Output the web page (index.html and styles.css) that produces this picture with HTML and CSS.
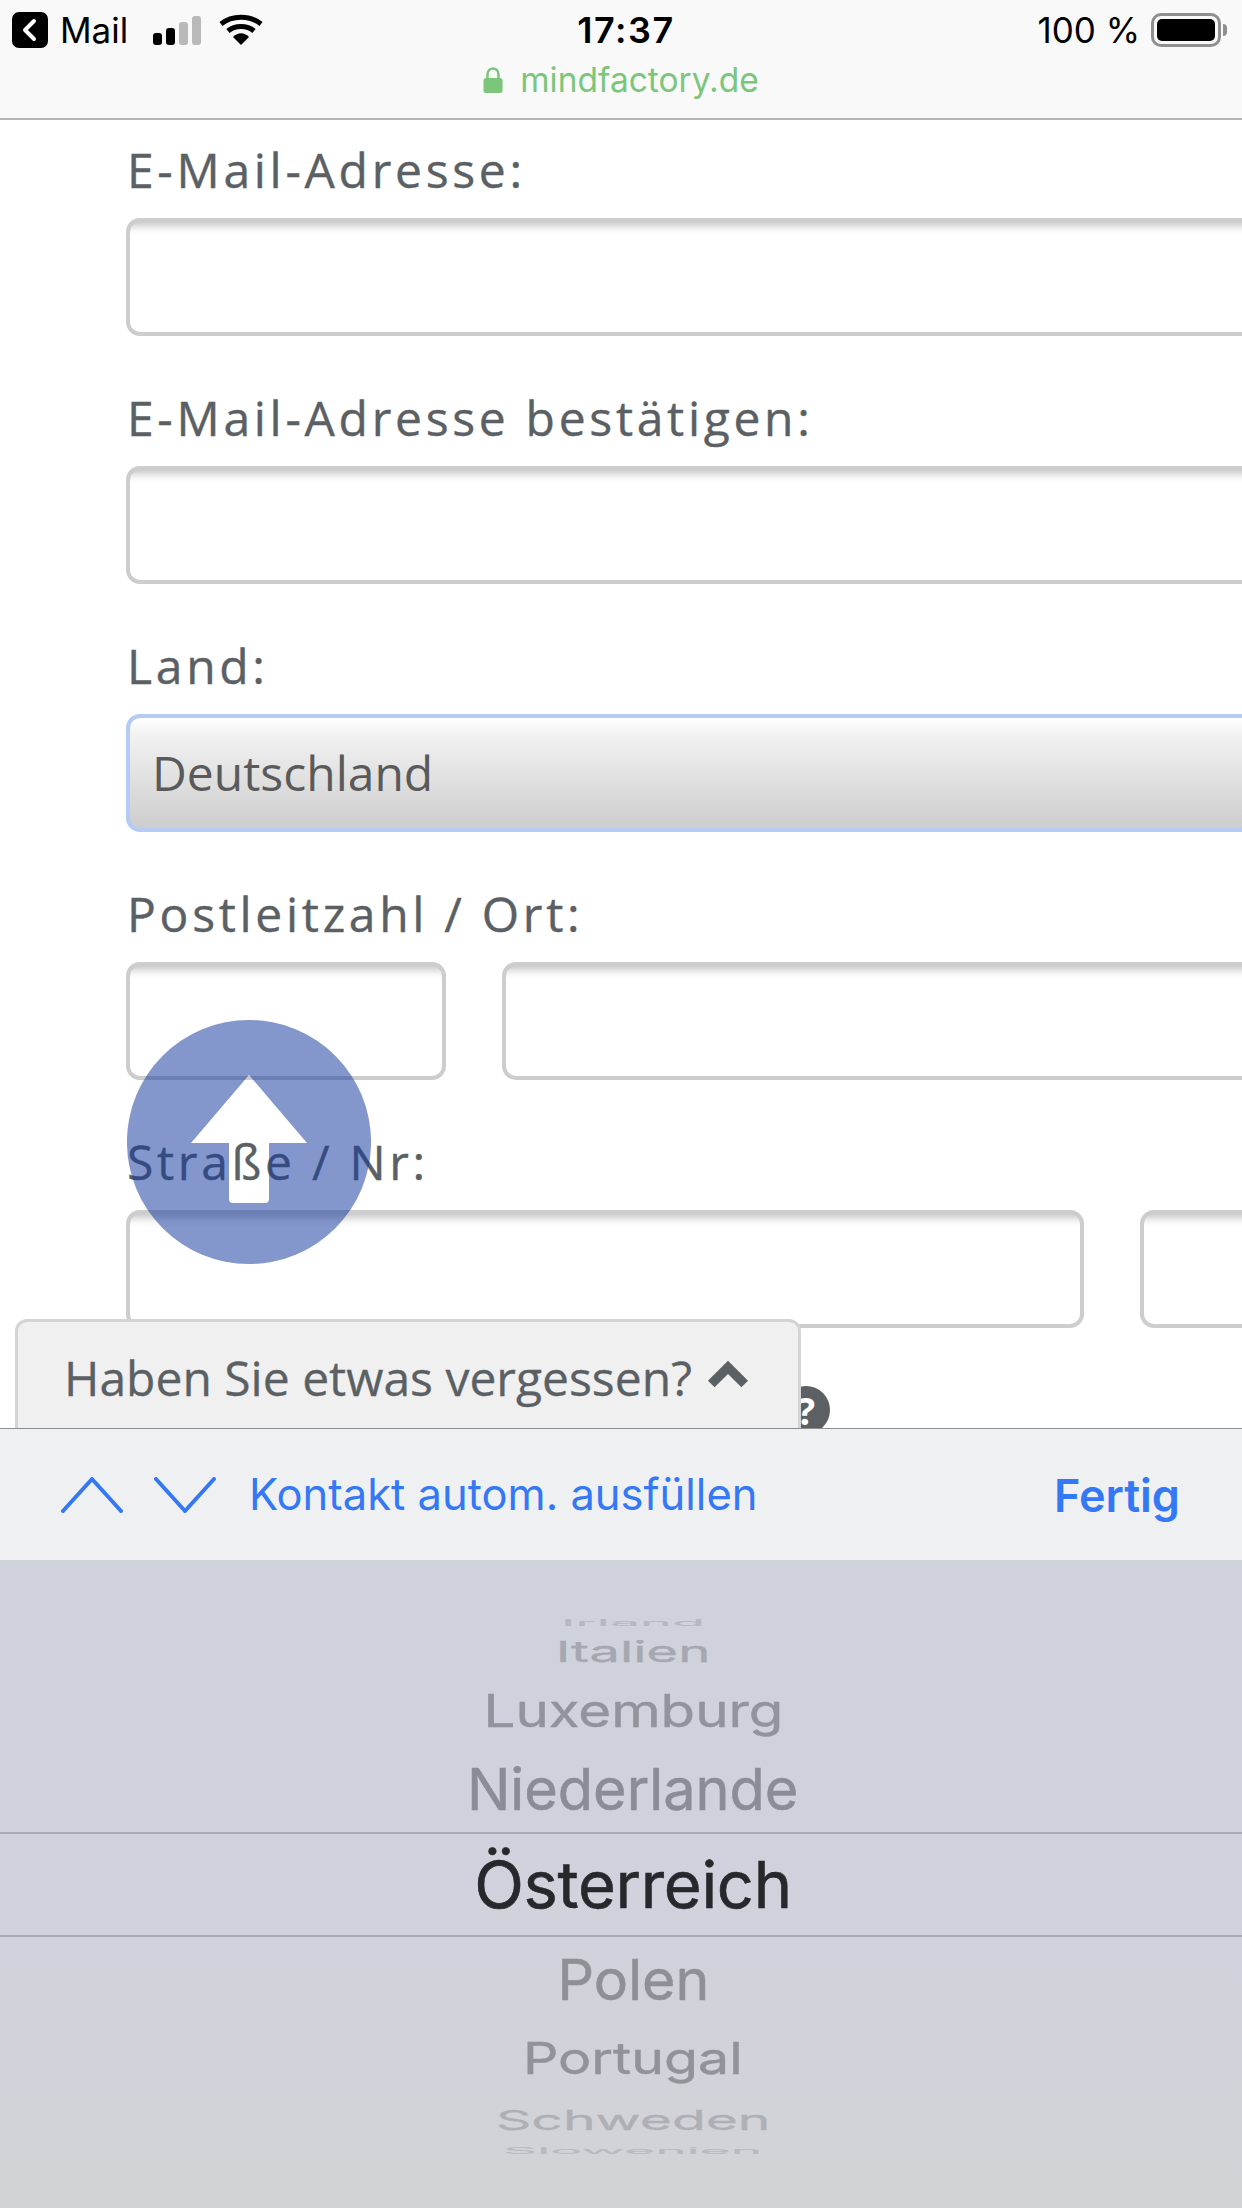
FILE: index.html
```html
<!DOCTYPE html>
<html>
<head>
    <title>Mindfactory Kasse</title>
    <meta charset="utf-8">
    <meta name="viewport" content="width=device-width, initial-scale=1">
    <link rel="stylesheet" href="styles.css">
</head>

<body>
    <header class="browser-bar">
        <div class="status-row">
            <div class="status-left">
                <span class="back-badge">
                    <svg width="36" height="36" viewBox="0 0 36 36"><path d="M22 9 L13 18 L22 27" fill="none" stroke="#fff" stroke-width="4" stroke-linecap="round" stroke-linejoin="round"/></svg>
                </span>
                <span class="carrier">Mail</span>
                <span class="signal">
                    <i class="bar bar-1"></i><i class="bar bar-2"></i><i class="bar bar-3"></i><i class="bar bar-4"></i>
                </span>
                <svg class="wifi" width="44" height="32" viewBox="0 0 44 32">
                    <path d="M2 10 C13 1 31 1 42 10" fill="none" stroke="#000" stroke-width="5"/>
                    <path d="M9 17 C16 11 28 11 35 17" fill="none" stroke="#000" stroke-width="5"/>
                    <path d="M14 23 C19 18 25 18 30 23 L22 31 Z" fill="#000"/>
                </svg>
            </div>
            <div class="clock">17:37</div>
            <div class="status-right">
                <span class="battery-text">100 %</span>
                <span class="battery"><i class="battery-fill"></i></span>
                <i class="battery-nub"></i>
            </div>
        </div>
        <div class="url-row">
            <svg width="20" height="26" viewBox="0 0 20 26"><path d="M4.500 12 V7 a5.500 5.500 0 0 1 11 0 V12" fill="none" stroke="#7bc67b" stroke-width="2.500"/><rect x="0.500" y="11" width="19" height="15" rx="2.500" fill="#7bc67b"/></svg>
            <span class="url-text">mindfactory.de</span>
        </div>
    </header>

    <main class="page">
        <form class="address-form">
            <div class="field">
                <label>E-Mail-Adresse:</label>
                <div class="input-row"><div class="input grow"></div></div>
            </div>
            <div class="field">
                <label>E-Mail-Adresse bestätigen:</label>
                <div class="input-row"><div class="input grow"></div></div>
            </div>
            <div class="field">
                <label>Land:</label>
                <div class="input-row"><div class="input select grow">Deutschland</div></div>
            </div>
            <div class="field">
                <label>Postleitzahl / Ort:</label>
                <div class="input-row"><div class="input zip"></div><div class="input grow"></div></div>
            </div>
            <div class="field">
                <label>Straße / Nr:</label>
                <div class="input-row"><div class="input street"></div><div class="input grow"></div></div>
            </div>
            <div class="help-row"><span class="help-icon">?</span></div>
        </form>

        <!-- the arrow is a hole in the circle, the page shows through it -->
        <a class="to-top">
            <svg width="244" height="244" viewBox="0 0 244 244"><path fill-rule="evenodd" d="M122 0 A122 122 0 1 1 122 244 A122 122 0 1 1 122 0 Z M122 55 L180 123 H142 V179 a4 4 0 0 1 -4 4 H106 a4 4 0 0 1 -4 -4 V123 H64 Z" fill="#14399f"/></svg>
        </a>

        <div class="reminder">
            <span>Haben Sie etwas vergessen?</span>
            <svg width="42" height="30" viewBox="0 0 44 30"><path d="M22 1 L43 22 L36 29 L22 15 L8 29 L1 22 Z" fill="#5a6064"/></svg>
        </div>
    </main>

    <div class="keyboard-bar">
        <svg class="nav-arrow" width="64" height="36" viewBox="0 0 64 36"><path d="M3 34 L32 2 L61 34" fill="none" stroke="#3478f6" stroke-width="4" stroke-linecap="round" stroke-linejoin="round"/></svg>
        <svg class="nav-arrow" width="64" height="36" viewBox="0 0 64 36"><path d="M3 2 L32 34 L61 2" fill="none" stroke="#3478f6" stroke-width="4" stroke-linecap="round" stroke-linejoin="round"/></svg>
        <span class="autofill">Kontakt autom. ausfüllen</span>
        <span class="done">Fertig</span>
    </div>

    <div class="picker">
        <div class="wheel-row row-irland"><span>Irland</span></div>
        <div class="wheel-row row-italien"><span>Italien</span></div>
        <div class="wheel-row row-luxemburg"><span>Luxemburg</span></div>
        <div class="wheel-row row-niederlande"><span>Niederlande</span></div>
        <div class="wheel-row row-selected"><span>Österreich</span></div>
        <div class="wheel-row row-polen"><span>Polen</span></div>
        <div class="wheel-row row-portugal"><span>Portugal</span></div>
        <div class="wheel-row row-schweden"><span>Schweden</span></div>
        <div class="wheel-row row-slowenien"><span>Slowenien</span></div>
    </div>
</body>
</html>
```

FILE: styles.css
```css
* {
    box-sizing: border-box;
}

html, body {
    margin: 0;
    padding: 0;
}

body {
    width: 1242px;
    height: 2208px;
    overflow: hidden;
    display: flex;
    flex-direction: column;
    background-color: #ffffff;
    font-family: "Open Sans", "Noto Sans", sans-serif;
}

/* safari top bar */
.browser-bar {
    height: 120px;
    flex-shrink: 0;
    background-color: #f9f9f9;
    border-bottom: 2px solid #b4b4b4;
    font-family: Inter, "Liberation Sans", sans-serif;
    color: #000000;
}

.status-row {
    height: 60px;
    display: grid;
    grid-template-columns: 1fr auto 1fr;
    align-items: center;
}

.status-left {
    display: flex;
    align-items: center;
    padding-left: 12px;
}

.back-badge {
    width: 36px;
    height: 36px;
    border-radius: 7px;
    background-color: #000000;
    display: flex;
}

.carrier {
    margin-left: 12px;
    font-size: 35px;
    width: 93px;
}

.signal {
    display: flex;
    align-items: flex-end;
    gap: 4px;
    height: 29px;
}

.bar {
    width: 9px;
    border-radius: 3px;
    background-color: #000000;
}

.bar-1 { height: 12px; }
.bar-2 { height: 17px; }
.bar-3 { height: 23px; background-color: #b9b9b9; }
.bar-4 { height: 29px; background-color: #b9b9b9; }

.wifi {
    margin-left: 18px;
}

.clock {
    margin-left: 10px;
    font-size: 36px;
    font-weight: 600;
    letter-spacing: 1.500px;
}

.status-right {
    display: flex;
    align-items: center;
    justify-content: flex-end;
    padding-right: 15px;
}

.battery-text {
    font-size: 35px;
    margin-right: 11px;
}

.battery {
    width: 70px;
    height: 34px;
    border: 3px solid #8f8f8f;
    border-radius: 10px;
    padding: 3px;
    display: flex;
}

.battery-fill {
    flex: 1;
    background-color: #000000;
    border-radius: 5px;
}

.battery-nub {
    width: 4px;
    height: 12px;
    margin-left: 2px;
    background-color: #8f8f8f;
    border-radius: 0 4px 4px 0;
}

.url-row {
    display: flex;
    justify-content: center;
    align-items: center;
    gap: 17px;
    color: #7bc67b;
    font-size: 33.500px;
}

/* page behind the keyboard */
.page {
    position: relative;
    height: 1308px;
    flex-shrink: 0;
    overflow: hidden;
}

.address-form {
    padding: 0 0 0 126px;
    width: 1500px;
    color: #5a6064;
}

.field {
    height: 248px;
    display: flex;
    flex-direction: column;
    padding-top: 26px;
}

.field label {
    height: 72px;
    font-size: 48px;
    line-height: 48px;
    letter-spacing: 3.700px;
    padding-left: 1px;
    -webkit-text-stroke: 0.4px #5a6064;
}

.input-row {
    display: flex;
    gap: 56px;
}

.input {
    height: 118px;
    border: 4px solid #cdcdcd;
    border-radius: 14px;
    background: linear-gradient(#cdcdcd, #f6f6f6 8px, #ffffff 13px);
}

.grow {
    flex: 1;
}

.zip {
    width: 320px;
    flex-shrink: 0;
}

.street {
    width: 958px;
    flex-shrink: 0;
}

.select {
    border-color: #b4ccf5;
    background: linear-gradient(#ffffff, #f2f2f2 15%, #cdcdcd);
    color: #5a5a5a;
    font-size: 48px;
    line-height: 110px;
    padding-left: 22px;
}

.help-row {
    padding: 26px 0 0 656px;
}

.help-icon {
    display: block;
    width: 48px;
    height: 48px;
    border-radius: 50%;
    background-color: #5a6064;
    color: #ffffff;
    font-size: 38px;
    font-weight: 700;
    line-height: 48px;
    text-align: center;
}

.to-top {
    position: absolute;
    left: 127px;
    top: 900px;
    width: 244px;
    height: 244px;
    opacity: .52;
}

.to-top svg {
    display: block;
}

.reminder {
    position: absolute;
    left: 15px;
    top: 1199px;
    width: 786px;
    height: 140px;
    padding: 23px 0 0 46px;
    display: flex;
    align-items: flex-start;
    gap: 15px;
    background-color: #f0f0f0;
    border: 3px solid #d4d4d4;
    border-radius: 12px;
    color: #5a6064;
    font-size: 48px;
    line-height: 66px;
    -webkit-text-stroke: 0.3px #5a6064;
}

.reminder svg {
    margin-top: 14px;
}

/* keyboard accessory bar */
.keyboard-bar {
    height: 132px;
    flex-shrink: 0;
    display: flex;
    align-items: center;
    padding: 0 62px 0 60px;
    background-color: #eff0f2;
    border-top: 1px solid #8e8e8e;
    color: #3478f6;
    font-family: Inter, "Liberation Sans", sans-serif;
}

.nav-arrow {
    margin-right: 29px;
}

.autofill {
    font-size: 43.500px;
    margin: 0 0 2px 3px;
}

.done {
    margin: 2px 0 0 auto;
    font-size: 45px;
    font-weight: 600;
}

/* country picker wheel */
.picker {
    flex: 1;
    padding-top: 57px;
    display: flex;
    flex-direction: column;
    background: linear-gradient(#cfd2db, #cfd2dd 40%, #d2d3d7);
    font-family: Inter, "Liberation Sans", sans-serif;
    color: #8a8d95;
    font-size: 60px;
}

.wheel-row {
    display: flex;
    justify-content: center;
    align-items: center;
    overflow: hidden;
    flex-shrink: 0;
    padding-left: 24px;
    -webkit-text-stroke: 0.6px currentColor;
}

.wheel-row span {
    display: block;
    line-height: 1;
}

.row-irland {
    height: 11px;
    color: #b5b8c0;
}
.row-irland span { transform: scale(.9, .14); }

.row-italien {
    height: 46px;
    color: #a5a8b0;
}
.row-italien span { transform: scale(.91, .48); }

.row-luxemburg {
    height: 72px;
    color: #91949c;
}
.row-luxemburg span { transform: scale(.94, .75); }

.row-niederlande {
    height: 86px;
}
.row-niederlande span { transform: scale(.96, .96); }

.row-selected {
    height: 105px;
    color: #26282b;
    font-size: 65px;
    letter-spacing: -0.3px;
    border-top: 2px solid #a9abb3;
    border-bottom: 2px solid #a9abb3;
}

.row-polen {
    height: 84px;
    color: #8e9095;
}
.row-polen span { transform: scale(.955, .94); }

.row-portugal {
    height: 74px;
    color: #919398;
}
.row-portugal span { transform: scale(.925, .74); }

.row-schweden {
    height: 50px;
    color: #aeb0b5;
}
.row-schweden span { transform: scale(.92, .46); }

.row-slowenien {
    height: 12px;
    color: #b8bac0;
}
.row-slowenien span { transform: scale(.89, .14); }
```
